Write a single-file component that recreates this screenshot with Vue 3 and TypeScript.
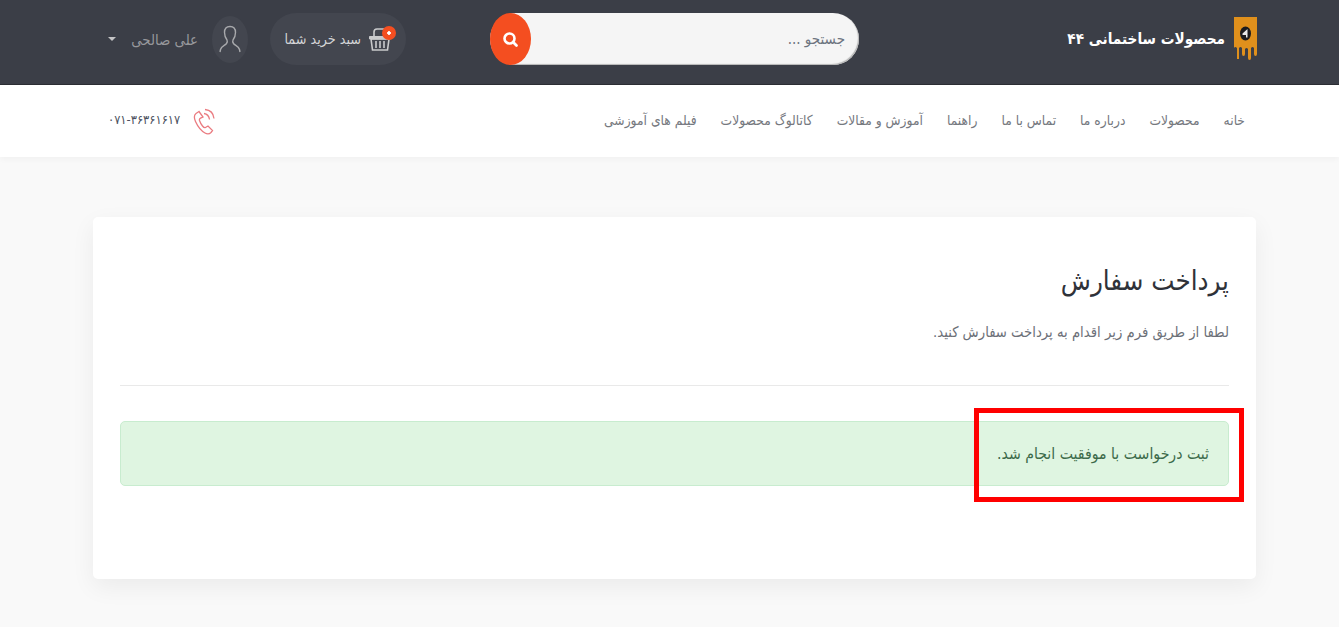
<template>
  <div class="page" dir="rtl">
    <!-- top bar -->
    <header class="topbar">
      <div class="wrap top-wrap topbar-row">
        <a class="brand">
          <svg class="brand-logo" width="23" height="43" viewBox="0 0 23 43">
            <path d="M0 0H23V37q0 2-1.500 2t-1.500-2V31q-1.500-2-3 0V41q0 2-1.500 2T14 41V32q-1.500-2-3 0v5q0 2-1.500 2T8 37V31Q6.500 29 5 31v11H3V31Q1 29 0 31Z" fill="#e0901c" />
            <ellipse cx="11.500" cy="16.500" rx="5.500" ry="7" fill="#1c1c1e" />
            <path d="M13.500 12v8.500h-1.500v-2.500H8.500v-1.500Z" fill="#e8e8e8" />
          </svg>
          <span>محصولات ساختمانی ۴۴</span>
        </a>

        <form class="search" @submit.prevent>
          <input type="text" placeholder="جستجو ..." />
          <button type="button" class="search-btn" aria-label="جستجو">
            <svg width="17" height="17" viewBox="0 0 17 17" fill="none" stroke="#fff">
              <circle cx="7.500" cy="7.500" r="5" stroke-width="2.600" />
              <path d="M11 11l3.500 3.500" stroke-width="2.800" stroke-linecap="round" />
            </svg>
          </button>
        </form>

        <div class="cart">
          <span class="cart-icon">
            <svg width="22" height="26" viewBox="0 0 22 26" fill="none" stroke="#c9cacc">
              <path d="M5 11V6q0-3 3-3h6q3 0 3 3v5" stroke-width="1.600" />
              <path d="M0.500 10.500h21v2.500h-21z" fill="#c9cacc" stroke-width="1" />
              <path d="M2 13l1.500 11h15L20 13Z" stroke-width="1.600" />
              <path d="M7 15v7M11 15v7M15 15v7" stroke-width="1.600" />
            </svg>
            <i class="cart-badge"></i>
          </span>
          <span>سبد خرید شما</span>
        </div>

        <div class="user">
          <span class="avatar">
            <svg width="22" height="28" viewBox="0 0 22 28" fill="none" stroke="#a8a9ac" stroke-width="1.400">
              <path d="M11 1.500c-3.500 0-5.500 2.500-5.500 6 0 3 1 5.500 2.500 7.500 .5 1 .2 2.500-.5 3.500C6 20.500 2.500 21 1.500 24.500L1 27M11 1.500c3.500 0 5.500 2.500 5.500 6 0 3-1 5.500-2.500 7.500-.5 1-.2 2.500 .5 3.500 1.500 2 5 2.500 6 6L21 27" />
            </svg>
          </span>
          <span class="user-name">علی صالحی</span>
          <i class="caret"></i>
        </div>
      </div>
    </header>

    <!-- main nav -->
    <nav class="mainnav">
      <div class="wrap nav-row">
        <ul class="menu">
          <li v-for="item in menu" :key="item">{{ item }}</li>
        </ul>
        <div class="phone">
          <svg width="22" height="27" viewBox="0 0 22 27" fill="none" stroke="#ea7b80" stroke-width="1.300">
            <path d="M6 3.500L3 5.500C1 7 1 10 2.500 13.500 5 19 8.500 23 12 25c2.500 1.500 4.500 1 6-.5l1.500-2-4.500-4.500-2.500 1.500c-1 .5-2-.2-3-1.500-1.500-2-2.500-4-3-5.500-.3-1 0-1.800 1-2.300L10 9Z" />
            <path d="M11 5.500c3 .5 5 2.500 5.500 6M12 1.500c5 .5 8.500 4 9 9" />
          </svg>
          <span class="phone-num">۰۷۱-۳۶۳۶۱۶۱۷</span>
        </div>
      </div>
    </nav>

    <!-- payment result -->
    <main class="wrap content">
      <section class="card">
        <h1>پرداخت سفارش</h1>
        <p class="lead">لطفا از طریق فرم زیر اقدام به پرداخت سفارش کنید.</p>
        <hr />
        <div class="alert">ثبت درخواست با موفقیت انجام شد.</div>
      </section>
    </main>

    <!-- annotation drawn on the screenshot -->
    <div class="highlight"></div>
  </div>
</template>

<script setup lang="ts">
const menu: string[] = [
  'خانه',
  'محصولات',
  'درباره ما',
  'تماس با ما',
  'راهنما',
  'آموزش و مقالات',
  'کاتالوگ محصولات',
  'فیلم های آموزشی',
]
</script>

<style>
html, body { background: #f9f9f9; }
</style>

<style scoped>
.page {
  position: relative;
  height: 627px;
  overflow: hidden;
  background: #f9f9f9;
  font-family: "DejaVu Sans Condensed", "DejaVu Sans", sans-serif;
  font-stretch: condensed;
}
.wrap { padding: 0 83px 0 93px; }
.top-wrap { padding-right: 82px; }

/* --- top bar --- */
.topbar {
  height: 84px;
  background: #3b3e47;
  border-bottom: 1px solid #2c2e34;
}
.topbar-row { display: flex; align-items: center; height: 84px; }
.brand {
  display: flex;
  align-items: center;
  gap: 9px;
  width: 190px;
  margin-top: -8px;
  color: #fff;
  font-size: 15.200px;
  font-weight: 700;
  white-space: nowrap;
}
.brand span { padding-top: 1px; }
.brand-logo { flex: none; }
.search {
  position: relative;
  width: 369px;
  height: 52px;
  margin-right: 208px;
  margin-top: -6px;
}
.search input {
  box-sizing: border-box;
  width: 100%;
  height: 100%;
  padding: 0 14px 0 50px;
  border: 0;
  border-radius: 26px;
  background: #f5f5f5;
  box-shadow: inset -1px -1px 1px #b5b5b5;
  font: 15px "DejaVu Sans Condensed", "DejaVu Sans", sans-serif;
  font-stretch: condensed;
  color: #6b7280;
  outline: none;
}
.search input::placeholder { color: #6d7480; opacity: 1; }
.search-btn {
  position: absolute;
  left: 0;
  top: 0;
  display: flex;
  align-items: center;
  justify-content: center;
  width: 41px;
  height: 52px;
  padding: 0;
  border: 0;
  border-radius: 50%;
  background: #f44e20;
}
.cart {
  display: flex;
  align-items: center;
  gap: 8px;
  height: 52px;
  width: 136px;
  box-sizing: border-box;
  margin-right: 84px;
  margin-top: -6px;
  padding-right: 15px;
  border-radius: 26px;
  background: #43464f;
  color: #d4d5d7;
  font-size: 14.200px;
  white-space: nowrap;
}
.cart-icon { position: relative; display: flex; }
.cart-badge {
  position: absolute;
  top: 0;
  right: -5px;
  width: 14px;
  height: 14px;
  border-radius: 50%;
  background: #f44e20 radial-gradient(circle, #fff 0 1.500px, transparent 2px);
}
.user {
  display: flex;
  align-items: center;
  margin-right: 22px;
  margin-top: -6px;
  color: #97989c;
  font-size: 14.800px;
  white-space: nowrap;
}
.avatar {
  display: flex;
  align-items: center;
  justify-content: center;
  width: 36px;
  height: 47px;
  border-radius: 50%;
  background: #43464f;
}
.user-name { margin-right: 14px; }
.caret {
  margin-right: 15px;
  border-top: 4px solid #c4c4c6;
  border-left: 4px solid transparent;
  border-right: 4px solid transparent;
}

/* --- main nav --- */
.mainnav {
  height: 72px;
  background: #fff;
  box-shadow: 0 2px 6px rgba(0, 0, 0, 0.04);
}
.nav-row { display: flex; align-items: center; justify-content: space-between; height: 72px; }
.menu {
  display: flex;
  gap: 24px;
  margin: 0;
  padding: 0 11px 2px 0;
  list-style: none;
  color: #75787e;
  font-size: 13.700px;
  white-space: nowrap;
}
.phone {
  display: flex;
  align-items: center;
  gap: 13px;
  padding-left: 15px;
  color: #4b5160;
  font-size: 12.800px;
  white-space: nowrap;
}
.phone-num { padding-bottom: 4px; }

/* --- content --- */
.content { padding-top: 60px; }
.card {
  box-sizing: border-box;
  height: 362px;
  padding: 44px 27px 0;
  background: #fff;
  border-radius: 5px;
  box-shadow: 0 8px 24px rgba(0, 0, 0, 0.06);
}
.card h1 {
  margin: 0;
  color: #2f3239;
  font-size: 27.400px;
  font-weight: 400;
  line-height: 40px;
}
.lead {
  margin: 21px 0 0;
  color: #6c7078;
  font-size: 14.700px;
  line-height: 20px;
}
.card hr {
  margin: 43px 0 35px;
  border: 0;
  border-top: 1px solid #e9e9e9;
}
.alert {
  box-sizing: border-box;
  display: flex;
  align-items: center;
  height: 65px;
  padding: 0 19px;
  border: 1px solid #c8eccf;
  border-radius: 5px;
  background: #dff5e1;
  color: #3c6a4a;
  font-size: 15.700px;
}
.highlight {
  position: absolute;
  left: 974px;
  top: 408px;
  width: 270px;
  height: 94px;
  box-sizing: border-box;
  border: 5px solid #ff0000;
}
</style>
